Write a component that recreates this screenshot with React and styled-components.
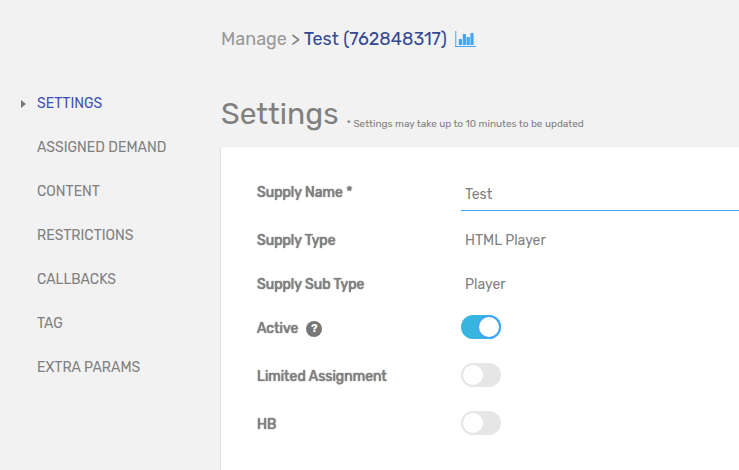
import { useState } from "react";
import styled, { createGlobalStyle } from "styled-components";

const GlobalStyle = createGlobalStyle`
  * {
    box-sizing: border-box;
  }

  body {
    margin: 0;
    background-color: #f2f2f2;
    color: #808080;
    font-family: Rubik, Roboto, "Liberation Sans", sans-serif;
    font-size: 14px;
    line-height: 20px;
  }
`;

const Page = styled.div`
  display: flex;
  min-height: 100vh;
`;

const Sidebar = styled.nav`
  flex: 0 0 221px;
  padding: 94px 16px 0 21px;
`;

const Menu = styled.ul`
  display: flex;
  flex-direction: column;
  gap: 24px;
  margin: 0;
  padding: 0;
  list-style: none;
`;

const MenuItem = styled.li`
  display: flex;
  align-items: center;
`;

const Caret = styled.span`
  width: 16px;

  &::before {
    content: "";
    display: ${({ $visible }) => ($visible ? "block" : "none")};
    width: 0;
    border-style: solid;
    border-width: 4px 0 4px 5px;
    border-color: transparent transparent transparent #777777;
  }
`;

const MenuLink = styled.a`
  color: ${({ $active }) => ($active ? "#3f51b5" : "#808080")};
  text-decoration: none;
`;

const Main = styled.main`
  flex: 1;
  min-width: 0;
  display: flex;
  flex-direction: column;
  padding-top: 27px;
`;

const Breadcrumb = styled.nav`
  display: flex;
  align-items: center;
  gap: 4px;
  font-size: 18px;
  line-height: 24px;
`;

const Crumb = styled.a`
  color: ${({ $current }) => ($current ? "#334795" : "#999999")};
  text-decoration: none;
`;

const StatsButton = styled.button`
  display: flex;
  margin-left: 4px;
  padding: 0;
  border: none;
  background: none;
  cursor: pointer;
`;

const Heading = styled.header`
  display: flex;
  align-items: flex-end;
  gap: 8px;
  padding: 43px 0 13px;
`;

const Title = styled.h1`
  margin: 0;
  font-size: 30px;
  font-weight: 400;
  line-height: 40px;
`;

const Note = styled.span`
  font-size: 10px;
`;

const Card = styled.form`
  flex: 1;
  padding: 32px 0 24px 36px;
  border-top-left-radius: 3px;
  background-color: #ffffff;
  box-shadow: 0 1px 2px rgba(0, 0, 0, 0.25);
`;

const Row = styled.div`
  display: flex;
  align-items: flex-start;
  min-height: ${({ $tall }) => ($tall ? "48px" : "44px")};
`;

const LabelCell = styled.div`
  display: flex;
  align-items: center;
  gap: 8px;
  flex: 0 0 204px;
  padding-top: 4px;
`;

const Label = styled.label`
  text-shadow: 0 0 1px #808080, 0 0 1px #808080;
`;

const Value = styled.output`
  padding: 4px 4px 0;
`;

const TextInput = styled.input`
  flex: 1;
  min-width: 0;
  height: 32px;
  padding: 0 4px;
  border: none;
  border-bottom: 1px solid #42a5f5;
  outline: none;
  background: none;
  color: inherit;
  font: inherit;
`;

const HelpButton = styled.button`
  width: 16px;
  height: 16px;
  padding: 0;
  border: none;
  border-radius: 50%;
  background-color: #777777;
  color: #ffffff;
  font-family: inherit;
  font-size: 11px;
  font-weight: 700;
  line-height: 16px;
  cursor: pointer;
`;

const Switch = styled.input`
  appearance: none;
  display: flex;
  width: 40px;
  height: 24px;
  margin: 0;
  padding: 2px;
  border-radius: 12px;
  background-color: #e6e6e6;
  cursor: pointer;

  &::before {
    content: "";
    width: 20px;
    height: 20px;
    border-radius: 50%;
    background-color: #ffffff;
  }

  &:checked {
    justify-content: flex-end;
    background-color: #38b5de;
  }

  &:checked::before {
    box-shadow: 0 0 0 2px #42a5f5;
  }
`;

const menuItems = [
  "SETTINGS",
  "ASSIGNED DEMAND",
  "CONTENT",
  "RESTRICTIONS",
  "CALLBACKS",
  "TAG",
  "EXTRA PARAMS",
];

const switches = [
  { id: "active", label: "Active", help: true },
  { id: "limited", label: "Limited Assignment" },
  { id: "hb", label: "HB" },
];

function ChartIcon() {
  return (
    <svg width="21" height="16" viewBox="0 0 21 16" aria-hidden="true">
      <path d="M0 0h1.4v16H0z" fill="#7cb9f3" />
      <path d="M0 15h21v1H0z" fill="#42a5f5" />
      <path
        d="M3.8 8h3.2v6H3.8zM7.8 3h3.2v11H7.8zM11.6 6h3.2v8h-3.2zM15.4 2h3.2v12h-3.2z"
        fill="#42a5f5"
      />
    </svg>
  );
}

function App() {
  const [name, setName] = useState("Test");
  const [values, setValues] = useState({
    active: true,
    limited: false,
    hb: false,
  });

  const toggle = (id) => {
    setValues((prev) => ({ ...prev, [id]: !prev[id] }));
  };

  return (
    <Page>
      <GlobalStyle />
      <Sidebar>
        <Menu>
          {menuItems.map((item, index) => (
            <MenuItem key={item}>
              <Caret $visible={index === 0} />
              <MenuLink href="#" $active={index === 0}>
                {item}
              </MenuLink>
            </MenuItem>
          ))}
        </Menu>
      </Sidebar>
      <Main>
        <Breadcrumb>
          <Crumb href="#">Manage</Crumb>
          <span>&gt;</span>
          <Crumb href="#" $current>
            Test (762848317)
          </Crumb>
          <StatsButton type="button" aria-label="Statistics">
            <ChartIcon />
          </StatsButton>
        </Breadcrumb>
        <Heading>
          <Title>Settings</Title>
          <Note>* Settings may take up to 10 minutes to be updated</Note>
        </Heading>
        <Card>
          <Row $tall>
            <LabelCell>
              <Label htmlFor="name">Supply Name *</Label>
            </LabelCell>
            <TextInput
              id="name"
              value={name}
              onChange={(e) => setName(e.target.value)}
            />
          </Row>
          <Row>
            <LabelCell>
              <Label htmlFor="type">Supply Type</Label>
            </LabelCell>
            <Value id="type">HTML Player</Value>
          </Row>
          <Row>
            <LabelCell>
              <Label htmlFor="subType">Supply Sub Type</Label>
            </LabelCell>
            <Value id="subType">Player</Value>
          </Row>
          {switches.map(({ id, label, help }) => (
            <Row key={id} $tall>
              <LabelCell>
                <Label htmlFor={id}>{label}</Label>
                {help && (
                  <HelpButton type="button" aria-label="Help">
                    ?
                  </HelpButton>
                )}
              </LabelCell>
              <Switch
                type="checkbox"
                role="switch"
                id={id}
                checked={values[id]}
                onChange={() => toggle(id)}
              />
            </Row>
          ))}
        </Card>
      </Main>
    </Page>
  );
}

export default App;
